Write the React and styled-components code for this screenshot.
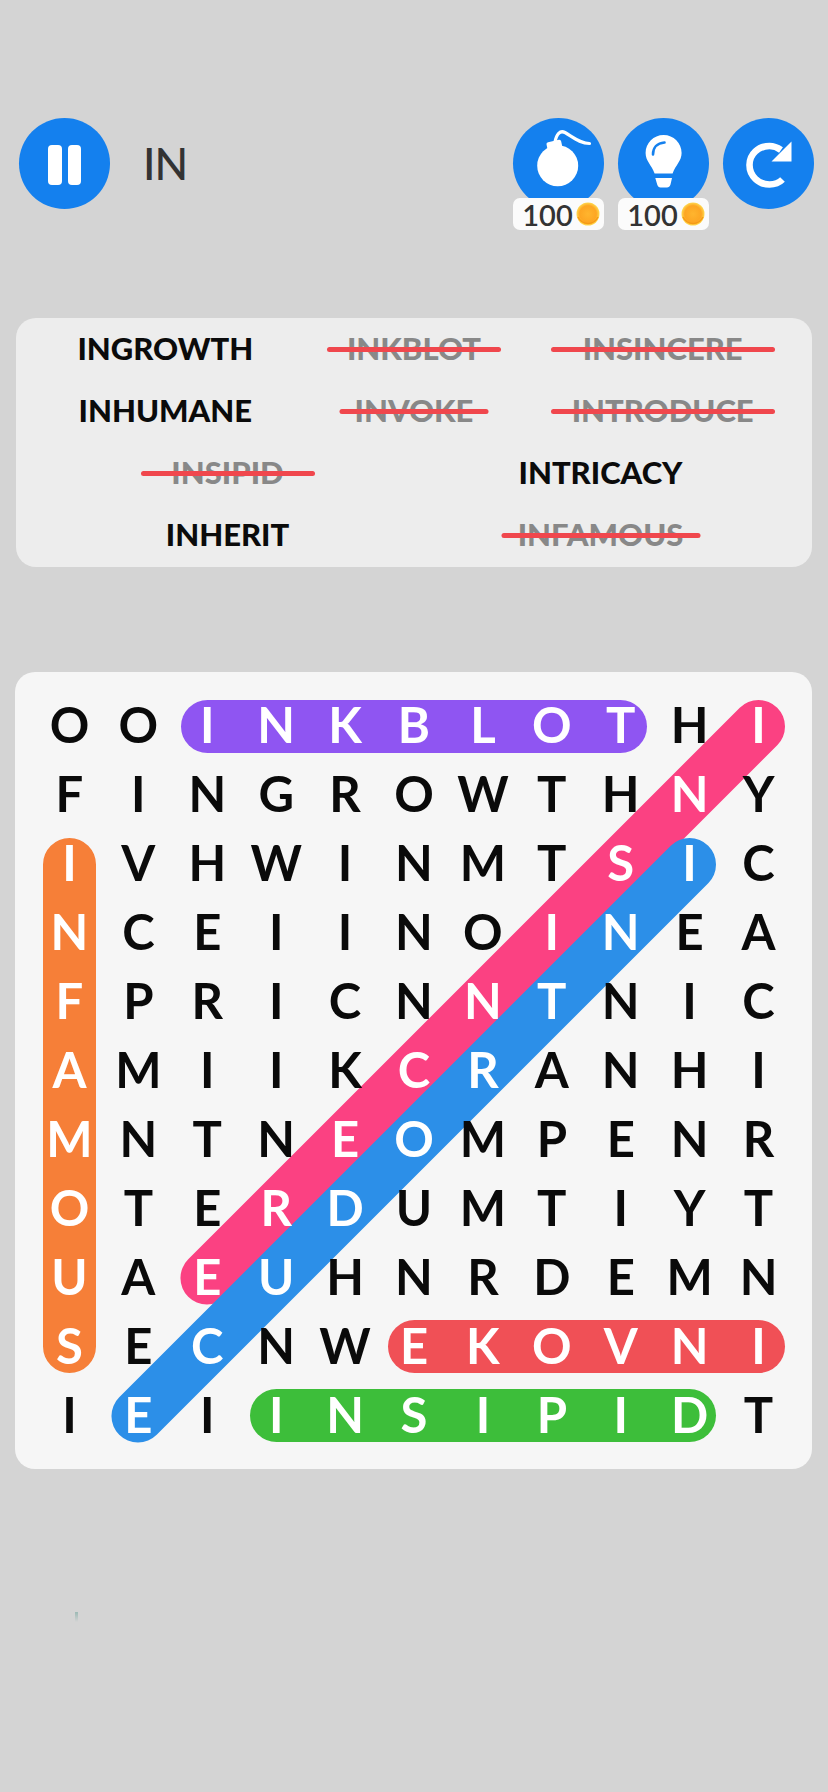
import React from 'react';
import styled, { createGlobalStyle } from 'styled-components';

const CELL = 758 / 11;
const PILL = 53;

const ROWS = [
  'OOINKBLOTHI',
  'FINGROWTHNY',
  'IVHWINMTSIC',
  'NCEIINOINEA',
  'FPRICNNTNIC',
  'AMIIKCRANHI',
  'MNTNEOMPENR',
  'OTERDUMTIYT',
  'UAEUHNRDEMN',
  'SECNWEKOVNI',
  'IEIINSIPIDT',
];

// found words: [row, col] start and end, painted in this order
const FOUND = [
  { from: [0, 2], to: [0, 8], color: '#8f55f2' },
  { from: [0, 10], to: [8, 2], color: '#fb4182' },
  { from: [2, 9], to: [10, 1], color: '#2c8fe8' },
  { from: [2, 0], to: [9, 0], color: '#f67f38' },
  { from: [9, 5], to: [9, 10], color: '#f05056' },
  { from: [10, 3], to: [10, 9], color: '#3dbe3a' },
];

const WORD_ROWS = [
  [['INGROWTH'], ['INKBLOT', true], ['INSINCERE', true]],
  [['INHUMANE'], ['INVOKE', true], ['INTRODUCE', true]],
  [['INSIPID', true], ['INTRICACY']],
  [['INHERIT'], ['INFAMOUS', true]],
];

const isFound = (r, c) =>
  FOUND.some(({ from, to }) => {
    const n = Math.max(Math.abs(to[0] - from[0]), Math.abs(to[1] - from[1]));
    for (let i = 0; i <= n; i++) {
      const rr = from[0] + (Math.sign(to[0] - from[0]) * i);
      const cc = from[1] + (Math.sign(to[1] - from[1]) * i);
      if (rr === r && cc === c) return true;
    }
    return false;
  });

const GlobalStyle = createGlobalStyle`
  html, body {
    margin: 0;
    padding: 0;
    background: #d4d4d4;
  }
  body {
    font-family: "Lato", "Liberation Sans", sans-serif;
  }
`;

const Page = styled.div`
  width: 828px;
  height: 1792px;
  overflow: hidden;
  padding-top: 118px;
  box-sizing: border-box;
`;

const Header = styled.header`
  display: flex;
  align-items: flex-start;
  height: 112px;
  padding: 0 14px 0 19px;
`;

const RoundButton = styled.div`
  position: relative;
  flex: none;
  width: 91px;
  height: 91px;
  border-radius: 50%;
  background: #1480ee;
  margin-left: ${props => props.$gap || 0}px;

  svg {
    display: block;
  }
`;

const Typed = styled.div`
  margin-left: 33px;
  height: 91px;
  line-height: 91px;
  font-size: 44px;
  font-weight: 500;
  letter-spacing: -1px;
  color: #333;
  flex: 1;
`;

const Price = styled.div`
  position: absolute;
  left: 0;
  right: 0;
  top: 80px;
  height: 32px;
  box-sizing: border-box;
  padding-left: 5px;
  background: #fbfbfb;
  border-radius: 7px;
  display: flex;
  align-items: center;
  justify-content: center;
  gap: 3px;
  font-size: 29px;
  font-weight: 600;
  color: #333;
  line-height: 1;
`;

const WordPanel = styled.section`
  margin: 88px 16px 0 16px;
  padding: 0 25px;
  height: 249px;
  background: #ededed;
  border-radius: 20px;
`;

const WordRow = styled.div`
  display: grid;
  grid-template-columns: repeat(${props => props.$cols}, 1fr);
  height: 62px;
  align-items: center;
  justify-items: center;
`;

const Word = styled.span`
  position: relative;
  top: -1px;
  font-size: 31px;
  font-weight: 900;
  line-height: 1;
  color: ${props => (props.$done ? '#888' : '#0b0b0b')};
`;

const Strike = styled.i`
  position: absolute;
  left: 50%;
  top: 50%;
  width: ${props => props.$letters * 25 - 1}px;
  height: 5px;
  margin-top: -1px;
  transform: translateX(-50%);
  border-radius: 3px;
  background: #f0474d;
`;

const BoardPanel = styled.section`
  margin: 105px 16px 0 15px;
  padding: 20px 19px 19px 20px;
  background: #f6f6f6;
  border-radius: 20px;
`;

const Board = styled.div`
  position: relative;
  width: 758px;
  height: 758px;
  display: grid;
  grid-template-columns: repeat(11, 1fr);
  grid-template-rows: repeat(11, 1fr);
`;

const Pill = styled.div`
  position: absolute;
  height: ${PILL}px;
  border-radius: ${PILL / 2}px;
  transform-origin: ${PILL / 2}px 50%;
  background: ${props => props.$color};
`;

const Letter = styled.div`
  position: relative;
  display: flex;
  align-items: center;
  justify-content: center;
  padding-bottom: 3px;
  font-size: 49px;
  font-weight: 700;
  line-height: 1;
  color: ${props => (props.$on ? '#fff' : '#0a0a0a')};
`;

const Speck = styled.div`
  width: 3px;
  height: 10px;
  margin: 143px 0 0 75px;
  background: linear-gradient(#9cb9b4, #d4d4d4);
`;

const PauseIcon = () => (
  <svg width="91" height="91" viewBox="0 0 91 91" fill="#fff">
    <rect x="29" y="27" width="14" height="40" rx="4" />
    <rect x="49" y="27" width="13" height="40" rx="4" />
  </svg>
);

const BombIcon = () => (
  <svg width="91" height="91" viewBox="0 0 91 91">
    <circle cx="44.7" cy="47.7" r="20.5" fill="#fff" />
    <rect x="34" y="23" width="15" height="10" rx="2" fill="#fff" transform="rotate(-12 41 28)" />
    <path d="M42 24C43.5 16 47 12 52 14.5C60 19 67 25.5 76.5 25.5" fill="none" stroke="#fff" strokeWidth="3.2" strokeLinecap="round" />
  </svg>
);

const BulbIcon = () => (
  <svg width="91" height="91" viewBox="0 0 91 91">
    <path d="M45.6 17C35.6 17 27.6 25 27.6 35C27.6 43 33.6 47 36.6 55.5H54.6C57.6 47 63.6 43 63.6 35C63.6 25 55.6 17 45.6 17Z" fill="#fff" />
    <path d="M37.3 60H54L52.5 66.5C52 68.5 50.5 69.5 49 69.5H42.5C41 69.5 39.7 68.5 39.2 66.5Z" fill="#fff" />
    <path d="M35 36.5C35 30 39 25 46.5 24.5" fill="none" stroke="#1480ee" strokeWidth="2.6" strokeLinecap="round" />
  </svg>
);

const RedoIcon = () => (
  <svg width="91" height="91" viewBox="0 0 91 91">
    <path d="M59.5 61.5C56 65 51 66.5 46.5 66.5C35.5 66.5 26.5 57.8 26.5 47C26.5 36.2 35.5 28 46.5 28C50.5 28 54.5 29.5 58 32" fill="none" stroke="#fff" strokeWidth="6.6" strokeLinecap="butt" />
    <path d="M68.5 23.5V43.5H48.5Z" fill="#fff" />
  </svg>
);

const Coin = ({ id }) => (
  <svg width="24" height="24" viewBox="0 0 24 24">
    <defs>
      <radialGradient id={id} cx="50%" cy="50%" r="50%">
        <stop offset="0%" stopColor="#ffb52e" />
        <stop offset="72%" stopColor="#fda623" />
        <stop offset="100%" stopColor="#ffd84f" />
      </radialGradient>
    </defs>
    <circle cx="12" cy="12" r="11.5" fill={`url(#${id})`} />
    <path d="M2 15A11 11 0 0 0 22 15" fill="none" stroke="#f59a16" strokeWidth="1.5" />
  </svg>
);

const pillStyle = ({ from, to }) => {
  const dx = (to[1] - from[1]) * CELL;
  const dy = (to[0] - from[0]) * CELL;
  return {
    left: from[1] * CELL + CELL / 2 - PILL / 2,
    top: from[0] * CELL + CELL / 2 - PILL / 2,
    width: Math.hypot(dx, dy) + PILL,
    transform: `rotate(${Math.atan2(dy, dx)}rad)`,
  };
};

const App = () => (
  <Page>
    <GlobalStyle />
    <Header>
      <RoundButton><PauseIcon /></RoundButton>
      <Typed>IN</Typed>
      <RoundButton>
        <BombIcon />
        <Price>100<Coin id="coin-a" /></Price>
      </RoundButton>
      <RoundButton $gap={14}>
        <BulbIcon />
        <Price>100<Coin id="coin-b" /></Price>
      </RoundButton>
      <RoundButton $gap={14}><RedoIcon /></RoundButton>
    </Header>

    <WordPanel>
      {WORD_ROWS.map((row, i) => (
        <WordRow key={i} $cols={row.length}>
          {row.map(([text, done]) => (
            <Word key={text} $done={done}>
              {text}
              {done && <Strike $letters={text.length} />}
            </Word>
          ))}
        </WordRow>
      ))}
    </WordPanel>

    <BoardPanel>
      <Board>
        {FOUND.map((f, i) => (
          <Pill key={i} $color={f.color} style={pillStyle(f)} />
        ))}
        {ROWS.map((row, r) =>
          row.split('').map((ch, c) => (
            <Letter key={`${r}-${c}`} $on={isFound(r, c)}>{ch}</Letter>
          ))
        )}
      </Board>
    </BoardPanel>

    <Speck />
  </Page>
);

export default App;
